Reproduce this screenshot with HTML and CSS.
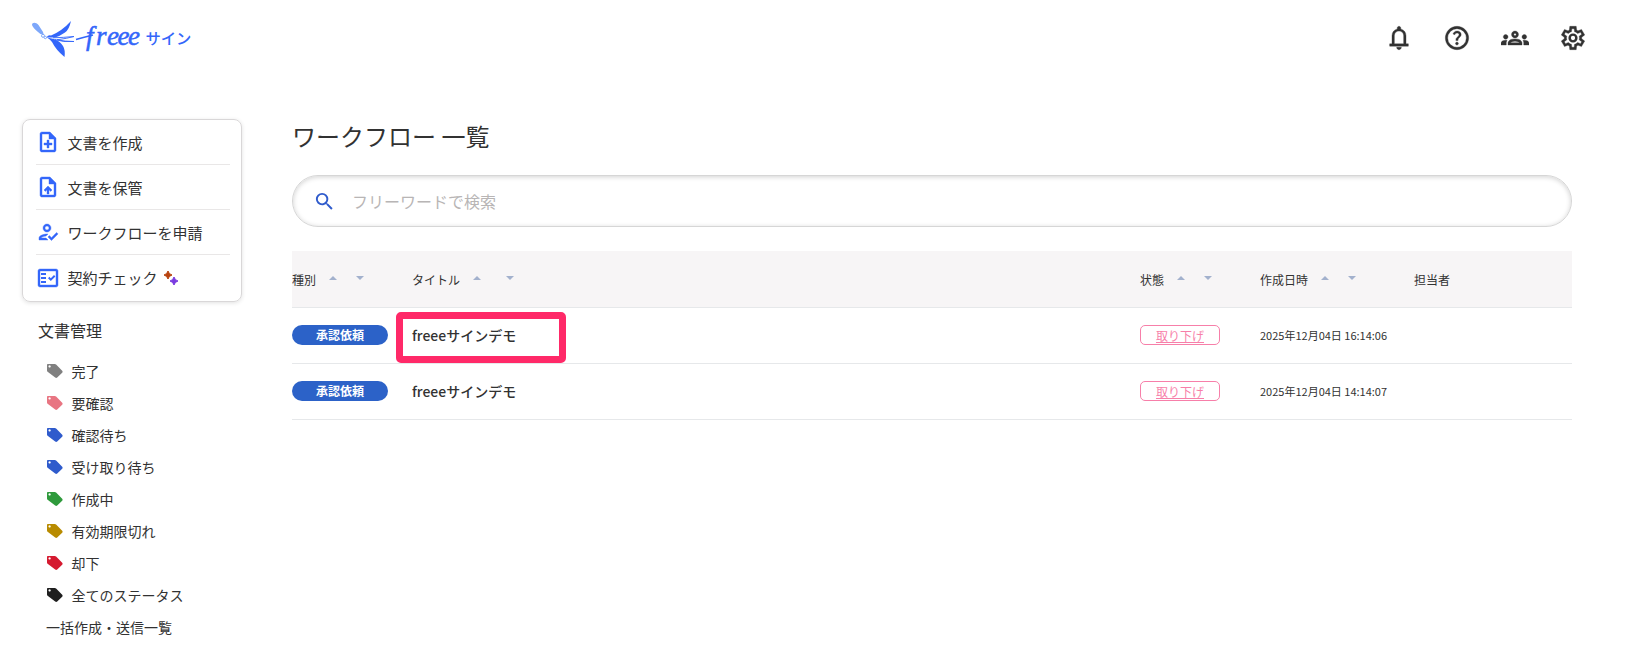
FILE: index.html
```
<!DOCTYPE html>
<html lang="ja">

<head>
    <meta charset="UTF-8">
    <meta name="viewport" content="width=device-width, initial-scale=1.0">
    <title>ワークフロー 一覧</title>
    <link rel="stylesheet" href="styles.css">
</head>

<body>
    <!-- tag icon shared by the status list -->
    <svg class="defs" width="0" height="0">
        <symbol id="tag" viewBox="0 0 16 14">
            <path fill-rule="evenodd" d="M0 .8Q0 0 .8 0H7.800Q8.500 0 9.100.5L15.200 6.800Q16 7.700 15.200 8.700L10.200 13.500Q9.200 14.300 8.200 13.500L.6 7.700Q0 7.200 0 6.500ZM2.600 1.300a1.100 1.100 0 1 0 .01 0Z" />
        </symbol>
    </svg>

    <header class="header">
        <svg class="logo" width="170" height="44" viewBox="0 0 170 44">
            <path fill="#7da7fa" d="M1 5C1 2 5 2 7.500 5L12 12Q13 14 12 14.500Q10 15 7 12Q2 8 1 5Z" />
            <circle cx="12" cy="15.800" r="1.500" fill="#fff" stroke="#7da7fa" />
            <circle cx="14.300" cy="17.500" r="1.200" fill="#fff" stroke="#7da7fa" />
            <path fill="#3366fa" d="M15.500 17.500Q17 14.800 20 15.500Q31 11 40 1Q38 10 34 12.500Q29 16 24 17.500Z" />
            <path fill="#3366fa" d="M16 17.500L23 19Q29 21 32 26Q34.500 30 33.500 37Q25 30 21 22Q19 19 16 17.500Z" />
            <path fill="none" stroke="#3366fa" stroke-width=".9" d="M22 17.800Q33 17.500 43 16.500Q36 18.500 26 19.800Q34 21.500 43 21.500Q32 22.500 24 19.500" />
            <path fill="none" stroke="#3366fa" stroke-width="1.500" d="M45 19.500Q52 17.500 62 15" />
            <text class="logo-name" x="55 65 76 86.500 97" y="24.500">freee</text>
            <text class="logo-sub" x="114.500" y="23.500">サイン</text>
        </svg>
        <nav class="header-icons">
            <svg viewBox="0 -960 960 960"><path d="M160-200v-80h80v-280q0-83 50-147.500T420-792v-28q0-25 17.500-42.500T480-880q25 0 42.500 17.500T540-820v28q80 20 130 84.500T720-560v280h80v80H160Zm320 120q-33 0-56.500-23.500T400-160h160q0 33-23.500 56.500T480-80ZM320-280h320v-280q0-66-47-113t-113-47q-66 0-113 47t-47 113v280Z" /></svg>
            <svg viewBox="0 -960 960 960"><path d="M478-240q21 0 35.500-14.500T528-290q0-21-14.500-35.500T478-340q-21 0-35.500 14.500T428-290q0 21 14.500 35.500T478-240Zm-36-154h74q0-33 7.500-52t42.500-52q26-26 41-49.500t15-56.500q0-56-41-86t-97-30q-57 0-92.500 30T342-618l66 26q5-18 22.500-39t53.500-21q32 0 48 17.500t16 38.500q0 20-12 37.500T506-526q-44 39-54 59t-10 73Zm38 314q-83 0-156-31.500T197-197q-54-54-85.500-127T80-480q0-83 31.500-156T197-763q54-54 127-85.500T480-880q83 0 156 31.500T763-763q54 54 85.500 127T880-480q0 83-31.500 156T763-197q-54 54-127 85.500T480-80Zm0-80q134 0 227-93t93-227q0-134-93-227t-227-93q-134 0-227 93t-93 227q0 134 93 227t227 93Z" /></svg>
            <svg viewBox="0 -960 960 960"><path d="M0-240v-63q0-43 44-70t116-27q13 0 25 .5t23 2.500q-14 21-21 44t-7 48v65H0Zm240 0v-65q0-32 17.500-58.500T307-410q32-20 76.500-30t96.500-10q53 0 97.500 10t76.500 30q32 20 49 46.500t17 58.500v65H240Zm540 0v-65q0-26-6.500-49T754-397q11-2 22.500-2.500t23.500-.5q72 0 116 26.500t44 70.500v63H780Zm-455-80h311q-10-20-55.500-35T480-370q-55 0-100.500 15T325-320ZM160-440q-33 0-56.500-23.500T80-520q0-34 23.500-57t56.500-23q34 0 57 23t23 57q0 33-23 56.500T160-440Zm640 0q-33 0-56.500-23.500T720-520q0-34 23.500-57t56.500-23q34 0 57 23t23 57q0 33-23 56.500T800-440Zm-320-40q-50 0-85-35t-35-85q0-51 35-85.500t85-34.500q51 0 85.500 34.500T600-600q0 50-34.500 85T480-480Zm0-80q17 0 28.500-11.500T520-600q0-17-11.500-28.500T480-640q-17 0-28.500 11.500T440-600q0 17 11.500 28.500T480-560Z" /></svg>
            <svg viewBox="0 -960 960 960"><path d="m370-80-16-128q-13-5-24.500-12T307-235l-119 50L78-375l103-78q-1-7-1-13.500v-27q0-6.500 1-13.500L78-585l110-190 119 50q11-8 23-15t24-12l16-128h220l16 128q13 5 24.500 12t22.500 15l119-50 110 190-103 78q1 7 1 13.500v27q0 6.500-2 13.500l103 78-110 190-118-50q-11 8-23 15t-24 12L590-80H370Zm70-80h79l14-106q31-8 57.500-23.500T639-327l99 41 39-68-86-65q5-14 7-29.500t2-31.500q0-16-2-31.500t-7-29.500l86-65-39-68-99 42q-22-23-48.500-38.500T533-694l-13-106h-79l-14 106q-31 8-57.500 23.500T321-633l-99-41-39 68 86 64q-5 15-7 30t-2 32q0 16 2 31t7 30l-86 65 39 68 99-42q22 23 48.500 38.500T427-266l13 106Z" /><circle class="ring" cx="480" cy="-480" r="115" /></svg>
        </nav>
    </header>

    <div class="container">
        <aside class="sidebar">
            <ul class="menu">
                <li>
                    <svg class="doc" viewBox="0 -960 960 960"><path d="M440-240h80v-120h120v-80H520v-120h-80v120H320v80h120v120ZM240-80q-33 0-56.500-23.500T160-160v-640q0-33 23.500-56.500T240-880h320l240 240v480q0 33-23.500 56.500T720-80H240Zm280-520v-200H240v640h480v-440H520Z" /></svg>
                    文書を作成
                </li>
                <li>
                    <svg class="doc" viewBox="0 -960 960 960"><path d="M440-200h80v-167l64 64 56-57-160-160-160 160 57 56 63-63v167ZM240-80q-33 0-56.500-23.500T160-160v-640q0-33 23.500-56.500T240-880h320l240 240v480q0 33-23.500 56.500T720-80H240Zm280-520v-200H240v640h480v-440H520Z" /></svg>
                    文書を保管
                </li>
                <li>
                    <svg class="bold" viewBox="0 0 24 24"><path d="M11 12c2.210 0 4-1.790 4-4s-1.790-4-4-4-4 1.790-4 4 1.790 4 4 4zm0-6c1.100 0 2 .9 2 2s-.9 2-2 2-2-.9-2-2 .9-2 2-2zm-1 12H5c.2-.63 2.570-1.680 4.960-1.940l2.040-2c-.39-.04-.68-.06-1-.06-2.670 0-8 1.340-8 4v2h9l-2-2zm10.600-5.500l-5.130 5.170-2.070-2.080L12 17l3.470 3.500L22 13.910l-1.400-1.410z" /></svg>
                    ワークフローを申請
                </li>
                <li>
                    <svg class="bold" viewBox="0 0 24 24"><path d="M20 3H4c-1.100 0-2 .9-2 2v14c0 1.100.9 2 2 2h16c1.100 0 2-.9 2-2V5c0-1.100-.9-2-2-2zm0 16H4V5h16v14z" /><path d="M19.400 10.400L18 9l-3.200 3.200-1.400-1.400L12 12.200l2.800 2.800zM5 7h5v2H5zM5 11h5v2H5zM5 15h5v2H5z" stroke="none" /></svg>
                    契約チェック
                    <svg class="sparkle" viewBox="0 0 16 16">
                        <path fill="#b8430f" d="M5 1Q5.800 4.200 9 5Q5.800 5.800 5 9Q4.200 5.800 1 5Q4.200 4.200 5 1Z" stroke="#b8430f" />
                        <path fill="#7a3be0" d="M11 7Q11.800 10.200 15 11Q11.800 11.800 11 15Q10.200 11.800 7 11Q10.200 10.200 11 7Z" stroke="#7a3be0" />
                    </svg>
                </li>
            </ul>

            <h2 class="side-title">文書管理</h2>
            <ul class="status-list">
                <li><svg class="gray"><use href="#tag" /></svg>完了</li>
                <li><svg class="pink"><use href="#tag" /></svg>要確認</li>
                <li><svg class="blue"><use href="#tag" /></svg>確認待ち</li>
                <li><svg class="blue"><use href="#tag" /></svg>受け取り待ち</li>
                <li><svg class="green"><use href="#tag" /></svg>作成中</li>
                <li><svg class="yellow"><use href="#tag" /></svg>有効期限切れ</li>
                <li><svg class="red"><use href="#tag" /></svg>却下</li>
                <li><svg class="black"><use href="#tag" /></svg>全てのステータス</li>
                <li>一括作成・送信一覧</li>
            </ul>
        </aside>

        <main class="main">
            <h1>ワークフロー 一覧</h1>
            <div class="search">
                <svg viewBox="0 0 24 24"><path d="M15.500 14h-.79l-.28-.27A6.470 6.470 0 0 0 16 9.500 6.500 6.500 0 1 0 9.500 16c1.610 0 3.090-.59 4.230-1.570l.27.28v.79l5 4.990L20.490 19l-4.990-5zm-6 0C7.010 14 5 11.990 5 9.500S7.010 5 9.500 5 14 7.010 14 9.500 11.990 14 9.500 14z" /></svg>
                <input type="text" placeholder="フリーワードで検索">
            </div>

            <table class="list">
                <thead>
                    <tr>
                        <th class="col-type">種別<i class="up"></i><i class="down"></i></th>
                        <th class="col-title">タイトル<i class="up"></i><i class="down wide"></i></th>
                        <th class="col-state">状態<i class="up"></i><i class="down"></i></th>
                        <th class="col-date">作成日時<i class="up"></i><i class="down"></i></th>
                        <th>担当者</th>
                    </tr>
                </thead>
                <tbody>
                    <tr>
                        <td><span class="badge">承認依頼</span></td>
                        <td class="title"><span class="marked">freeeサインデモ</span></td>
                        <td><a class="withdraw">取り下げ</a></td>
                        <td class="date">2025年12月04日 16:14:06</td>
                        <td></td>
                    </tr>
                    <tr>
                        <td><span class="badge">承認依頼</span></td>
                        <td class="title">freeeサインデモ</td>
                        <td><a class="withdraw">取り下げ</a></td>
                        <td class="date">2025年12月04日 14:14:07</td>
                        <td></td>
                    </tr>
                </tbody>
            </table>
        </main>
    </div>
</body>

</html>
```
FILE: styles.css
```
* {
    box-sizing: border-box;
}

body {
    margin: 0;
    background-color: white;
    color: #323232;
    font-family: "Noto Sans CJK JP", sans-serif;
    font-size: 14px;
}

ul {
    list-style: none;
    margin: 0;
    padding: 0;
}

.defs {
    display: none;
}

.header {
    display: flex;
    justify-content: space-between;
    align-items: center;
    height: 76px;
    padding: 0 42px 0 31px;
}

.logo {
    margin-top: 8px;
}

.logo-name {
    font-family: "Liberation Serif", serif;
    font-style: italic;
    font-size: 27px;
    fill: #3366fa;
    stroke: #3366fa;
    stroke-width: 0.5px;
}

.logo-sub {
    font-size: 15.3px;
    font-weight: 500;
    fill: #3366fa;
}

.header-icons {
    display: flex;
    gap: 30px;
}

.header-icons svg {
    width: 28px;
    height: 28px;
    fill: #323232;
    stroke: #323232;
    stroke-width: 12;
}

.header-icons .ring {
    fill: none;
    stroke-width: 84;
}

.container {
    display: flex;
    padding: 43px 57px 0 22px;
}

.sidebar {
    width: 220px;
    margin-right: 50px;
}

.menu {
    height: 183px;
    padding: 0 11px 0 13px;
    border: 1px solid #d9d7d8;
    border-radius: 8px;
    box-shadow: 0 1px 4px rgba(0, 0, 0, 0.12);
}

.menu li {
    display: flex;
    align-items: center;
    height: 45px;
    font-size: 15px;
    border-bottom: 1px solid #e9e7e7;
}

.menu li:last-child {
    border-bottom: none;
}

.menu svg {
    width: 24px;
    height: 24px;
    margin-right: 7.5px;
    fill: #3366fa;
    stroke: #3366fa;
}

.menu .doc {
    stroke-width: 16;
}

.menu .bold {
    stroke-width: 0.4;
}

.menu .sparkle {
    width: 16px;
    height: 16px;
    margin: 0 0 0 5px;
}

.side-title {
    margin: 16px 0 13px 16px;
    font-size: 16px;
    font-weight: 400;
    line-height: 24px;
}

.status-list {
    padding-left: 25px;
}

.status-list li {
    display: flex;
    align-items: center;
    height: 32px;
}

.status-list li:last-child {
    margin-left: -1px;
}

.status-list svg {
    width: 16px;
    height: 14px;
    margin-right: 8.5px;
}

.gray {
    fill: #808080;
}

.pink {
    fill: #e87582;
}

.blue {
    fill: #2f5bcc;
}

.green {
    fill: #2f9a3c;
}

.yellow {
    fill: #b88b00;
}

.red {
    fill: #d51a30;
}

.black {
    fill: #1f1f1f;
}

.main {
    flex: 1;
}

h1 {
    margin: 0;
    font-size: 24px;
    font-weight: 400;
    line-height: 34px;
}

.search {
    display: flex;
    align-items: center;
    height: 52px;
    margin: 22px 0 24px;
    padding-left: 20px;
    border: 1px solid #d6d6d6;
    border-radius: 26px;
    box-shadow: inset 0 1px 5px rgba(0, 0, 0, 0.18);
}

.search svg {
    width: 23px;
    height: 23px;
    fill: #2f5bcc;
}

.search input {
    width: 600px;
    margin-left: 16px;
    padding: 0;
    border: none;
    outline: none;
    background: transparent;
    font-family: inherit;
    font-size: 16px;
}

.search input::placeholder {
    color: #b8b5b5;
}

.list {
    width: 100%;
    table-layout: fixed;
    border-collapse: separate;
    border-spacing: 0;
}

.list th,
.list td {
    height: 56px;
    padding: 0 0 1px;
    text-align: left;
    border-bottom: 1px solid #e6e8ea;
}

.list th {
    background-color: #f7f5f6;
    font-size: 12px;
    font-weight: 400;
}

.list thead th {
    height: 57px;
    padding: 0;
}

.col-type {
    width: 120px;
}

.col-title {
    width: 728px;
}

.col-state {
    width: 120px;
}

.col-date {
    width: 154px;
}

/* sort arrows */
.up,
.down {
    display: inline-block;
    border-left: 4px solid transparent;
    border-right: 4px solid transparent;
    vertical-align: 5px;
}

.up {
    margin-left: 13px;
    border-bottom: 4px solid #a3b1cd;
}

.down {
    margin-left: 19px;
    border-top: 4px solid #a3b1cd;
}

.wide {
    margin-left: 25px;
}

.badge {
    display: block;
    width: 96px;
    height: 20px;
    border-radius: 10px;
    background-color: #2c62c8;
    color: white;
    font-size: 12px;
    font-weight: 700;
    line-height: 20px;
    text-align: center;
}

.list .title {
    position: relative;
    color: #323232;
    font-weight: 500;
}

/* frame drawn over the first title */
.marked::after {
    content: "";
    box-sizing: border-box;
    position: absolute;
    left: -16px;
    top: 4px;
    width: 170px;
    height: 51px;
    border: 7px solid #ff2968;
    border-radius: 5px;
}

.withdraw {
    display: block;
    width: 80px;
    height: 20px;
    border: 1px solid #f77fa9;
    border-radius: 5px;
    color: #f77fa9;
    font-size: 12px;
    line-height: 19px;
    text-align: center;
    text-decoration: underline;
}

.date {
    font-size: 11px;
}
```
